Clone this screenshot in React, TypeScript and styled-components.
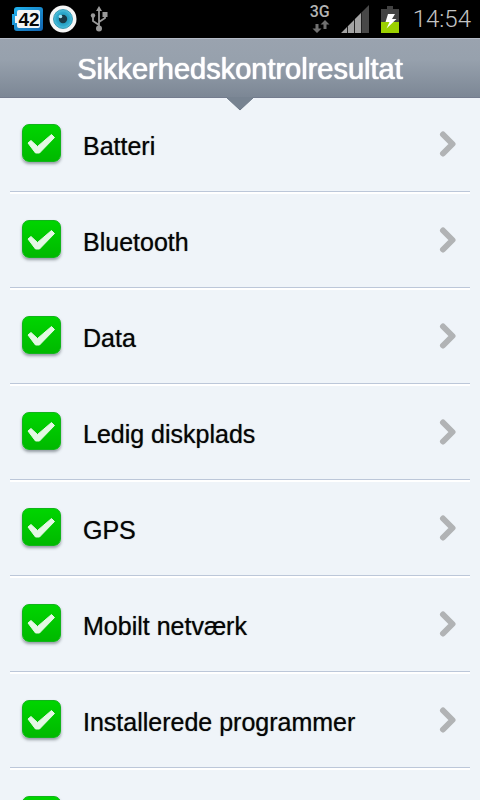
import React from "react";
import styled, { createGlobalStyle } from "styled-components";

const GlobalStyle = createGlobalStyle`
  * { box-sizing: border-box; }
  body { margin: 0; background: #eff4f9; }
`;

const Screen = styled.div`
  display: flex;
  flex-direction: column;
  height: 100vh;
  overflow: hidden;
  background: #eff4f9;
  color: #050505;
  font-family: "Liberation Sans", Arial, sans-serif;
`;

const StatusBar = styled.div`
  flex: none;
  display: flex;
  align-items: center;
  justify-content: space-between;
  height: 38px;
  padding: 0 9px 0 12px;
  background: #000;
`;

const StatusGroup = styled.div<{ $gap: number }>`
  display: flex;
  align-items: center;
  gap: ${(p) => p.$gap}px;
  svg { display: block; }
`;

const UsbSlot = styled.div`
  padding-left: 8px;
`;

const Network = styled.div`
  display: flex;
  flex-direction: column;
  align-items: center;
  width: 20px;
  height: 30px;
  color: #b4b4b4;
  font: 500 16px/16px Roboto, sans-serif;
  svg { align-self: flex-end; }
`;

const Clock = styled.time`
  margin-left: 3px;
  color: #c4c4c4;
  font: 300 24px/38px Roboto, sans-serif;
`;

const Header = styled.header`
  position: relative;
  flex: none;
  display: flex;
  align-items: center;
  justify-content: center;
  height: 60px;
  padding-top: 2px;
  border-top: 1px solid #b3bac6;
  border-bottom: 1px solid #747c8e;
  background: linear-gradient(#9aa3af 0%, #97a1ad 35%, #7c8795 100%);
`;

const Title = styled.h1`
  margin: 0;
  color: #fff;
  font-size: 29px;
  line-height: 32px;
  font-weight: 400;
  text-shadow: 0 0 1px #fff, 0 0 1px #fff;
`;

const Pointer = styled.svg`
  position: absolute;
  top: 57px;
  left: 50%;
  transform: translateX(-50%);
`;

const List = styled.ul`
  flex: 1;
  min-height: 0;
  margin: 0;
  padding: 0 10px;
  list-style: none;
  overflow: hidden;
`;

const Row = styled.li`
  display: flex;
  align-items: center;
  height: 96px;
  padding: 0 13px 2px 12px;
  border-bottom: 2px solid #fff;
  box-shadow: inset 0 -1px 0 #bcc7d9;
`;

const RowLabel = styled.label`
  flex: 1;
  display: flex;
  align-items: center;
  gap: 22px;
  font-size: 25px;
  line-height: 30px;
  text-shadow: 0 0 1px rgba(0, 0, 0, 0.6);
`;

const LabelText = styled.span`
  padding-top: 4px;
`;

const TickBox = styled.span`
  display: grid;
  margin-bottom: 2px;
  > * { grid-area: 1 / 1; }
  svg { pointer-events: none; }
`;

const Check = styled.input`
  appearance: none;
  width: 39px;
  height: 38px;
  margin: 0;
  border: 1px solid #12b41b;
  border-radius: 7px;
  background: linear-gradient(#00d500, #00b900);
  box-shadow: 0 2px 3px rgba(40, 50, 60, 0.45);
`;

const OpenButton = styled.button`
  display: flex;
  padding: 0;
  border: 0;
  background: none;
`;

const items = [
  "Batteri",
  "Bluetooth",
  "Data",
  "Ledig diskplads",
  "GPS",
  "Mobilt netværk",
  "Installerede programmer",
  "",
];

const BatteryCount = () => (
  <svg width="32" height="26" viewBox="0 0 32 26">
    <defs>
      <linearGradient id="count" x1="0" y1="0" x2="1" y2="1">
        <stop offset="0" stopColor="#21b5f0" />
        <stop offset="1" stopColor="#1262ad" />
      </linearGradient>
    </defs>
    <path d="M5 1H28Q31 1 31 4V22Q31 25 28 25H5Q2 25 2 22V19H0V8H2V4Q2 1 5 1Z" fill="url(#count)" />
    <path d="M7 4H26Q28 4 28 6V20Q28 22 26 22H7Q5 22 5 20V17H3V10H5V6Q5 4 7 4Z" fill="#f2f4f5" />
    <text x="17" y="20" textAnchor="middle" fontFamily="Liberation Sans" fontWeight="700" fontSize="19" fill="#050505">42</text>
  </svg>
);

const Eye = () => (
  <svg width="28" height="28" viewBox="0 0 28 28">
    <defs>
      <radialGradient id="iris">
        <stop offset="0" stopColor="#168dac" />
        <stop offset=".7" stopColor="#2fa9cc" />
        <stop offset="1" stopColor="#56c5df" />
      </radialGradient>
    </defs>
    <circle cx="14" cy="14" r="13.5" fill="#f6f6f6" />
    <circle cx="14" cy="14" r="9.5" fill="url(#iris)" stroke="#238ca7" strokeWidth=".8" />
    <circle cx="14" cy="14" r="4.2" fill="#1a3a47" />
    <circle cx="11.5" cy="11.5" r="1.8" fill="#a9e4f1" />
  </svg>
);

const Usb = () => (
  <svg width="18" height="26" viewBox="0 0 18 26" fill="#999" stroke="#999">
    <path d="M9 4V22M9 19L3 15V10M9 16L15 12V8" fill="none" strokeWidth="1.8" />
    <path d="M9 0L12 5H6Z" stroke="none" />
    <circle cx="3" cy="9.5" r="2.2" stroke="none" />
    <rect x="12.5" y="6" width="5" height="5" stroke="none" />
    <circle cx="9" cy="22.5" r="3" stroke="none" />
  </svg>
);

const DataArrows = () => (
  <svg width="18" height="14" viewBox="0 0 18 14" fill="#707070">
    <path d="M3.5 4H6.500V8.500H9.500L5 13L0.500 8.500H3.500Z" />
    <path d="M13 0L17.5 4.500H14.500V9H11.500V4.500H8.500Z" />
  </svg>
);

const Signal = () => (
  <svg width="29" height="28" viewBox="0 0 29 28">
    <path d="M14 14L28 0V28H14Z" fill="#484848" />
    <path d="M0 28L6 22V28ZM7 21L13 15V28H7ZM14 14L20 8V28H14Z" fill="#a3a3a3" />
    <path d="M6.5 21V28M13.5 14V28M20.5 7V28" stroke="#222" />
  </svg>
);

const Battery = () => (
  <svg width="18" height="27" viewBox="0 0 18 27">
    <path d="M6 0H12V3H18V27H0V3H6Z" fill="#424242" />
    <path d="M0 16H18V27H0Z" fill="#9bd000" />
    <path d="M7 8H14L11 13H15.5L5.5 22.5L8.5 16H4.5Z" fill="#fff" />
  </svg>
);

const Tick = () => (
  <svg width="39" height="38" viewBox="0 0 39 38">
    <path d="M6 19L9 16.500L15.500 22.500L29.500 10.500L32.500 13.500L17.500 29H13.500Z" fill="#e4f8e4" stroke="#e4f8e4" strokeWidth="1" strokeLinejoin="round" />
  </svg>
);

const Chevron = () => (
  <svg width="18" height="28" viewBox="0 0 18 28">
    <path d="M4 4.5L13.5 14L4 23.5" fill="none" stroke="#b1b3b5" strokeWidth="6" strokeLinecap="round" strokeLinejoin="round" />
  </svg>
);

export default function App() {
  return (
    <>
      <GlobalStyle />
      <Screen>
        <StatusBar>
          <StatusGroup $gap={5}>
            <BatteryCount />
            <Eye />
            <UsbSlot>
              <Usb />
            </UsbSlot>
          </StatusGroup>
          <StatusGroup $gap={11}>
            <Network>
              3G
              <DataArrows />
            </Network>
            <Signal />
            <Battery />
            <Clock>14:54</Clock>
          </StatusGroup>
        </StatusBar>
        <Header>
          <Title>Sikkerhedskontrolresultat</Title>
          <Pointer width="30" height="15" viewBox="0 0 30 15">
            <path d="M1 1H29L15 14Z" fill="#778391" />
            <path d="M1 1L15 14L29 1" fill="none" stroke="#6d7988" />
          </Pointer>
        </Header>
        <List>
          {items.map((item, i) => (
            <Row key={i}>
              <RowLabel>
                <TickBox>
                  <Check type="checkbox" defaultChecked />
                  <Tick />
                </TickBox>
                <LabelText>{item}</LabelText>
              </RowLabel>
              <OpenButton type="button">
                <Chevron />
              </OpenButton>
            </Row>
          ))}
        </List>
      </Screen>
    </>
  );
}
